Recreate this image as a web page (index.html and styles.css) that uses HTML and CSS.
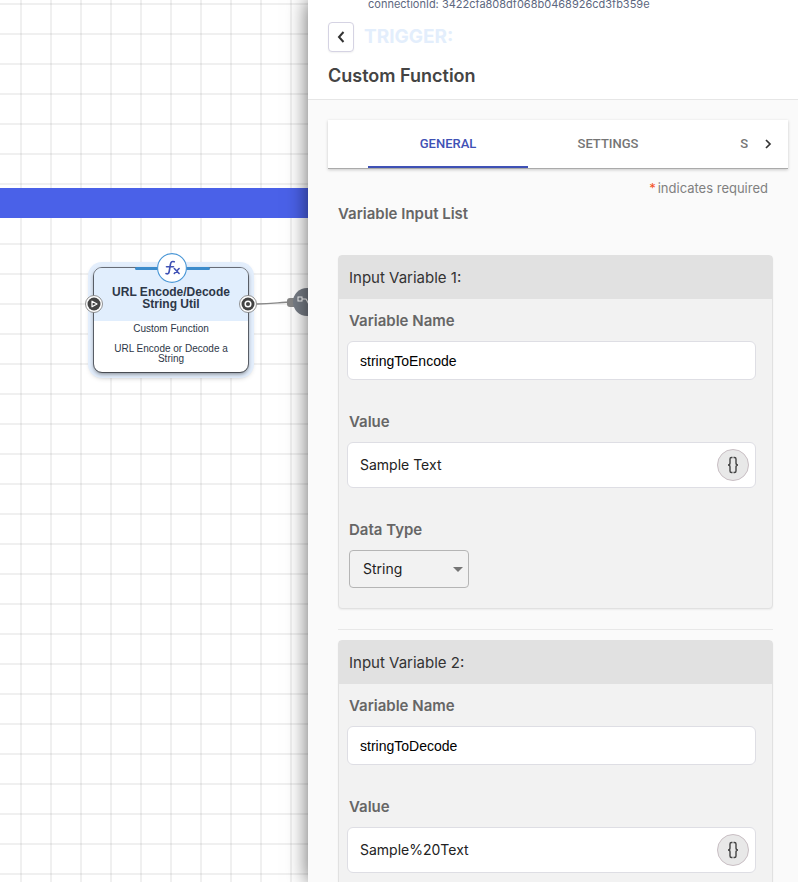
FILE: index.html
```html
<!DOCTYPE html>
<html lang="en">
<head>
<meta charset="utf-8">
<title>Custom Function</title>
<link rel="stylesheet" href="styles.css">
</head>
<body>
<div class="app">
  <main class="canvas">
    <div class="band"></div>
    <svg class="edge" width="60" height="40" viewBox="0 0 60 40" aria-hidden="true">
      <path d="M5 20C22 20 28 18 40 18" fill="none" stroke="#888" stroke-width="1.4"/>
      <rect x="35" y="14" width="10" height="9" rx="3" fill="#858585"/>
      <circle cx="55" cy="18" r="14" fill="#777d86"/>
      <path d="M50 15h4l5 9" fill="none" stroke="#fff" stroke-width="1.2"/>
      <rect x="46" y="13" width="4" height="4" fill="#777d86" stroke="#fff"/>
    </svg>
    <article class="node">
      <div class="node-head"><h2>URL Encode/Decode String Util</h2></div>
      <p>Custom Function</p>
      <p class="node-note">URL Encode or Decode a String</p>
      <span class="node-bar"></span>
      <svg class="node-icon" width="30" height="30" viewBox="0 0 30 30" aria-hidden="true">
        <circle cx="15" cy="15" r="14.400" fill="#fff" stroke="#4a97d6" stroke-width="1.100"/>
        <path d="M17.300 8.800C14.800 7.900 13.800 9 13.400 11.500L12.200 18.500C11.800 20.800 10.700 21.300 9 20.600M9.500 13.800h7" fill="none" stroke="#3f51b5" stroke-width="1.600" stroke-linecap="round"/>
        <path d="M17.300 15.500l4.800 5M22.100 15.500l-4.800 5" fill="none" stroke="#3f51b5" stroke-width="1.600" stroke-linecap="round"/>
      </svg>
      <svg class="port port-in" width="18" height="18" viewBox="0 0 18 18" aria-hidden="true">
        <circle cx="9" cy="9" r="8.500" fill="#fff" stroke="#777" stroke-width=".8"/>
        <circle cx="9" cy="9" r="6.500" fill="#444"/>
        <path d="M7 6.200l5 2.800-5 2.800z" fill="#444" stroke="#fff" stroke-width="1.200" stroke-linejoin="round"/>
      </svg>
      <svg class="port port-out" width="18" height="18" viewBox="0 0 18 18" aria-hidden="true">
        <circle cx="9" cy="9" r="8.500" fill="#fff" stroke="#777" stroke-width=".8"/>
        <circle cx="9" cy="9" r="6.500" fill="#444"/>
        <circle cx="9" cy="9" r="2.800" fill="#444" stroke="#fff" stroke-width="1.500"/>
      </svg>
    </article>
  </main>

  <aside class="panel">
    <header class="panel-head">
      <p class="connection">connectionId: 3422cfa808df068b0468926cd3fb359e</p>
      <div class="title-row">
        <button class="back" type="button" aria-label="Back">
          <svg width="10" height="14" viewBox="0 0 10 14" aria-hidden="true"><path d="M7.500 2L3 7l4.500 5" fill="none" stroke="#333" stroke-width="2"/></svg>
        </button>
        <span class="kind">TRIGGER:</span>
      </div>
      <h1>Custom Function</h1>
    </header>

    <nav class="tabs">
      <div class="tab-list" role="tablist">
        <button class="tab active" type="button" role="tab" aria-selected="true">GENERAL</button>
        <button class="tab" type="button" role="tab">SETTINGS</button>
        <button class="tab partial" type="button" role="tab">S</button>
      </div>
      <button class="scroll" type="button" aria-label="Next tabs">
        <svg width="8" height="10" viewBox="0 0 8 10" aria-hidden="true"><path d="M2 1l4 4-4 4" fill="none" stroke="#333" stroke-width="1.700"/></svg>
      </button>
    </nav>

    <form class="form">
      <p class="required"><span class="star">*</span>indicates required</p>
      <h2 class="section-title">Variable Input List</h2>

      <section class="card">
        <h3>Input Variable 1:</h3>
        <div class="fields">
          <label for="name1">Variable Name</label>
          <input class="box name" id="name1" type="text" value="stringToEncode">
          <label for="value1">Value</label>
          <div class="box value">
            <input id="value1" type="text" value="Sample Text">
            <button class="braces" type="button" aria-label="Insert variable">
              <svg width="14" height="18" viewBox="0 0 14 18" aria-hidden="true"><path d="M6.500 1.500H5.500Q4 1.500 4 3v4Q4 9 2 9q2 0 2 2v4q0 1.500 1.500 1.500h1M7.500 1.500h1q1.500 0 1.500 1.500v4q0 2 2 2-2 0-2 2v4q0 1.500-1.500 1.500H7.500" fill="none" stroke="#444" stroke-width="1.400"/></svg>
            </button>
          </div>
          <label for="type1">Data Type</label>
          <div class="select">
            <select id="type1"><option>String</option></select>
            <svg class="caret" width="10" height="5" viewBox="0 0 10 5" aria-hidden="true"><path d="M0 0h10L5 5z" fill="#757575"/></svg>
          </div>
        </div>
      </section>

      <hr>

      <section class="card">
        <h3>Input Variable 2:</h3>
        <div class="fields">
          <label for="name2">Variable Name</label>
          <input class="box name" id="name2" type="text" value="stringToDecode">
          <label for="value2">Value</label>
          <div class="box value">
            <input id="value2" type="text" value="Sample%20Text">
            <button class="braces" type="button" aria-label="Insert variable">
              <svg width="14" height="18" viewBox="0 0 14 18" aria-hidden="true"><path d="M6.500 1.500H5.500Q4 1.500 4 3v4Q4 9 2 9q2 0 2 2v4q0 1.500 1.500 1.500h1M7.500 1.500h1q1.500 0 1.500 1.500v4q0 2 2 2-2 0-2 2v4q0 1.500-1.500 1.500H7.500" fill="none" stroke="#444" stroke-width="1.400"/></svg>
            </button>
          </div>
        </div>
      </section>
    </form>
  </aside>
</div>
</body>
</html>
```
FILE: styles.css
```css
* { box-sizing: border-box; }
body, h1, h2, h3, p { margin: 0; }
body { font-family: Inter, "Liberation Sans", sans-serif; font-size: 15px; line-height: 20px; color: #333; }
button, input, select { font: inherit; color: inherit; margin: 0; padding: 0; border: 0; background: none; }

.app { display: flex; height: 100vh; overflow: hidden; }

/* Workflow canvas */
.canvas {
  flex: 308 1 0;
  position: relative;
  overflow: hidden;
  font-family: "Liberation Sans", sans-serif;
  background-color: #fff;
  background-image:
    linear-gradient(90deg, rgba(0, 0, 0, .06) 2px, transparent 2px),
    linear-gradient(rgba(0, 0, 0, .06) 2px, transparent 2px);
  background-size: 30px 30px;
  background-position: 20px 3px;
}
.band { position: absolute; top: 188px; left: 0; right: 0; height: 30px; background: #4a61e8; }
.edge { position: absolute; left: 252px; top: 284px; }
.node {
  position: absolute; left: 93px; top: 267px; width: 156px; height: 106px;
  border: 1px solid #6d737d; border-radius: 9px; background: #fff;
  box-shadow: 0 0 0 5px #e3eefc, 0 2px 6px 1px rgba(0, 0, 0, .45);
  text-align: center; font-size: 10px; line-height: 10px; color: #2d3748;
}
.node::before { content: ""; position: absolute; inset: 0; border-radius: 8px; box-shadow: 0 2px 4px rgba(0, 0, 0, .45); }
.node-head { height: 53px; padding: 18px 8px 0; margin-bottom: 3px; background: #e1eefd; border-radius: 8px 8px 0 0; }
.node h2 { font-size: 12px; line-height: 12px; font-weight: 700; }
.node-note { padding: 10px 14px 0; }
.node-bar { position: absolute; left: 41px; top: -1px; width: 75px; height: 3px; background: #3d8ccc; border-radius: 2px; }
.node-icon { position: absolute; left: 63px; top: -15px; }
.port { position: absolute; top: 27px; }
.port-in { left: -9px; }
.port-out { right: -9px; }

/* Configuration panel */
.panel { flex: 490 1 0; min-width: 0; position: relative; overflow: hidden; background: #fafafa; box-shadow: 0 0 20px 0 rgba(0, 0, 0, .6); }
.panel-head { display: flow-root; height: 100px; padding: 0 20px; background: #fff; border-bottom: 1px solid #e6e6e6; }
.connection { margin: -4px 0 10px 40px; font-size: 11px; line-height: 16px; color: #5d6780; white-space: nowrap; }
.title-row { display: flex; align-items: center; gap: 10px; }
.back { display: grid; place-items: center; width: 26px; height: 30px; border: 1px solid #d5d3e3; border-radius: 4px; background: #fff; box-shadow: 0 1px 2px rgba(0, 0, 0, .06); }
.kind { font-size: 19px; font-weight: 700; color: #e3eefc; }
.panel h1 { margin-top: 12px; font-size: 18px; line-height: 24px; font-weight: 600; color: #444; }

.tabs { display: flex; height: 49px; margin: 20px 10px 0 20px; padding-left: 40px; background: #fff; border-bottom: 1px solid #aaa; box-shadow: 0 1px 3px rgba(0, 0, 0, .2); }
.tab-list { flex: 1; display: flex; min-width: 0; overflow: hidden; }
.tab { flex: 0 0 160px; font: 500 13px/20px Roboto, sans-serif; letter-spacing: normal; color: #757575; }
.tab.active { color: #3f51b5; border-bottom: 2px solid #3f51b5; padding-top: 2px; }
.tab.partial { flex: 1; text-align: right; }
.scroll { width: 40px; display: grid; place-items: center; }

.form { padding: 9px 25px 0 30px; }
.required { padding-right: 5px; text-align: right; font-size: 13px; color: #808080; }
.star { margin-right: 2px; color: #f4511e; }
.section-title { margin: 6px 0 31px; font-size: 15px; line-height: 20px; font-weight: 600; color: #666; }
.card { border: 1px solid #e1e1e1; border-radius: 4px; background: #f2f2f2; box-shadow: 0 1px 2px rgba(0, 0, 0, .06); }
.card h3 { padding: 12px 10px 11px; font-size: 15px; line-height: 20px; font-weight: 400; color: #333; background: #e1e1e1; }
.fields { padding: 12px 16px 20px 8px; }
.fields label { display: block; margin: 0 0 10px 2px; font-size: 15px; font-weight: 600; color: #666; }
.box { display: block; width: 100%; margin-bottom: 32px; border: 1px solid #dedee4; border-radius: 6px; background: #fff; }
.name { height: 39px; padding: 0 12px; font-family: "Liberation Sans", sans-serif; font-size: 14px; color: #000; }
.value { display: flex; align-items: center; height: 46px; padding: 0 6px 0 12px; }
.value input { flex: 1; min-width: 0; font-size: 14px; color: #222; }
.braces { display: grid; place-items: center; width: 32px; height: 32px; border: 1px solid #c9bfc4; border-radius: 50%; background: #e8e8e8; }
.select { position: relative; width: 120px; margin-left: 2px; }
.select select { display: block; width: 100%; height: 38px; padding: 0 24px 0 13px; border: 1px solid #b5b5b5; border-radius: 4px; appearance: none; font-size: 14px; color: #222; }
.caret { position: absolute; right: 6px; top: 17px; pointer-events: none; }
hr { height: 1px; margin: 20px 0 10px; border: 0; background: #e8e8e8; }
```
